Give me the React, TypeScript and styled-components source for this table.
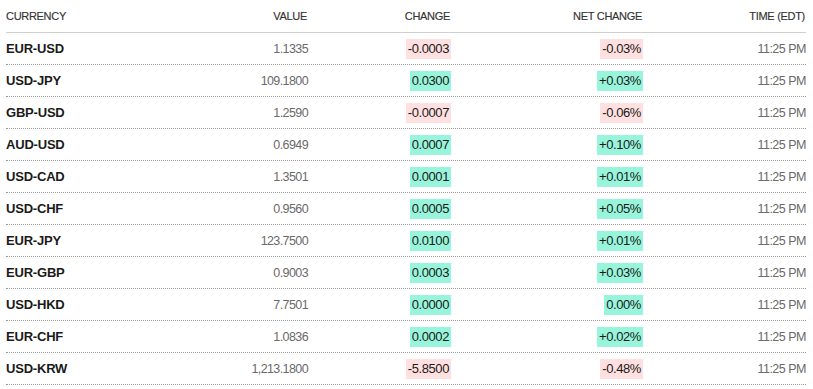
import React from "react";
import styled, { createGlobalStyle } from "styled-components";

const Global = createGlobalStyle`
  html, body { margin: 0; padding: 0; background: #fff; }
  body { font-family: "Liberation Sans", Arial, sans-serif; }
`;

const Wrap = styled.div`
  padding: 0 0 0 6px;
  width: 800px;
`;

const cols = "150px 152px 143px 192px 163px";

const HeaderRow = styled.div`
  display: grid;
  grid-template-columns: ${cols};
  height: 33px;
  align-items: center;
  border-bottom: 1px solid #cfcfcf;
  box-sizing: border-box;
`;

const HeadCell = styled.div<{ $left?: boolean }>`
  font-size: 11px;
  color: #333;
  text-transform: uppercase;
  letter-spacing: -0.3px;
  text-align: ${(p) => (p.$left ? "left" : "right")};
  padding-right: ${(p) => (p.$left ? "0" : "1px")};
  -webkit-text-stroke: 0.15px #333;
`;

const Row = styled.div`
  display: grid;
  grid-template-columns: ${cols};
  height: 32px;
  align-items: center;
  border-bottom: 1px dotted #9a9a9a;
  box-sizing: border-box;
`;

const Name = styled.div`
  font-size: 13px;
  font-weight: 700;
  color: #1a1a1a;
  letter-spacing: -0.2px;
`;

const Value = styled.div`
  font-size: 12.5px;
  color: #6a6a6a;
  text-align: right;
  letter-spacing: -0.6px;
`;

const Cell = styled.div`
  display: flex;
  justify-content: flex-end;
`;

const Badge = styled.span<{ $neg: boolean }>`
  display: inline-block;
  font-size: 13px;
  line-height: 20px;
  padding: 0 2px;
  color: #1a1a1a;
  letter-spacing: -0.4px;
  background: ${(p) => (p.$neg ? "#ffe0e0" : "#98f5db")};
`;

const Time = styled.div`
  font-size: 12.5px;
  color: #6a6a6a;
  text-align: right;
  letter-spacing: -0.5px;
`;

const data: [string, string, string, string][] = [
  ["EUR-USD", "1.1335", "-0.0003", "-0.03%"],
  ["USD-JPY", "109.1800", "0.0300", "+0.03%"],
  ["GBP-USD", "1.2590", "-0.0007", "-0.06%"],
  ["AUD-USD", "0.6949", "0.0007", "+0.10%"],
  ["USD-CAD", "1.3501", "0.0001", "+0.01%"],
  ["USD-CHF", "0.9560", "0.0005", "+0.05%"],
  ["EUR-JPY", "123.7500", "0.0100", "+0.01%"],
  ["EUR-GBP", "0.9003", "0.0003", "+0.03%"],
  ["USD-HKD", "7.7501", "0.0000", "0.00%"],
  ["EUR-CHF", "1.0836", "0.0002", "+0.02%"],
  ["USD-KRW", "1,213.1800", "-5.8500", "-0.48%"],
];

export default function App() {
  return (
    <Wrap>
      <Global />
      <HeaderRow>
        <HeadCell $left>Currency</HeadCell>
        <HeadCell>Value</HeadCell>
        <HeadCell>Change</HeadCell>
        <HeadCell>Net Change</HeadCell>
        <HeadCell>Time (EDT)</HeadCell>
      </HeaderRow>
      {data.map(([n, v, c, p]) => (
        <Row key={n}>
          <Name>{n}</Name>
          <Value>{v}</Value>
          <Cell>
            <Badge $neg={c.startsWith("-")}>{c}</Badge>
          </Cell>
          <Cell>
            <Badge $neg={p.startsWith("-")}>{p}</Badge>
          </Cell>
          <Time>11:25 PM</Time>
        </Row>
      ))}
    </Wrap>
  );
}
